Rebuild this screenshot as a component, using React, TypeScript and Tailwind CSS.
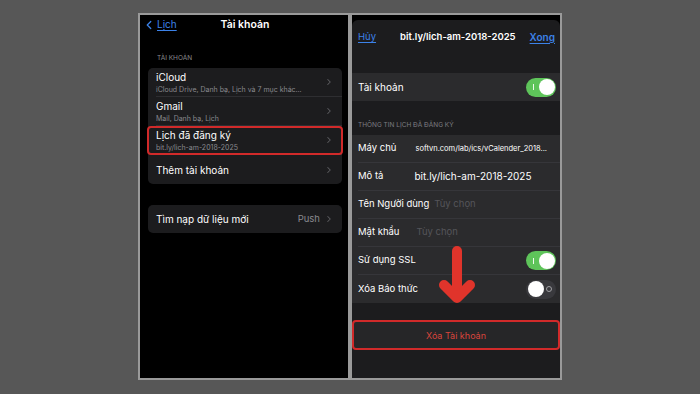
import { ChevronRight, ChevronLeft } from "lucide-react"

const font = { fontFamily: "Inter, 'Noto Sans', sans-serif" }

function Toggle({ on }: { on: boolean }) {
    if (on) {
        return (
            <div className="w-[30px] h-[19px] rounded-full bg-[#5ec45a] flex items-center justify-between pl-[7px] pr-[1.5px]">
                <div className="w-[1px] h-[6px] bg-white/90" />
                <div className="w-[16px] h-[16px] rounded-full bg-white" />
            </div>
        )
    }
    return (
        <div className="w-[30px] h-[19px] rounded-full bg-[#39393d] flex items-center justify-between pl-[1.5px] pr-[4px]">
            <div className="w-[16px] h-[16px] rounded-full bg-white" />
            <div className="w-[6px] h-[6px] rounded-full border border-[#a0a0a4]" />
        </div>
    )
}

function AccountRow({ title, sub, last, highlight }: { title: string; sub?: string; last?: boolean; highlight?: boolean }) {
    return (
        <div className="relative h-[29px] pl-[8px]">
            <div className={`h-full flex items-center pr-[8px] ${last ? "" : "border-b border-[#2e2e31]"}`}>
                <div className="flex-1 flex flex-col justify-center gap-[2px]">
                    <div className="text-[10px] leading-[12px] text-white">{title}</div>
                    {sub && <div className="text-[7px] leading-[9px] text-[#8a8a8e]">{sub}</div>}
                </div>
                <ChevronRight size={10} strokeWidth={2.5} className="text-[#5c5c60]" />
            </div>
            {highlight && (
                <div className="absolute -left-[1px] -right-[1px] top-0 bottom-0 border-2 border-[#d12a2a] rounded-[4px]" />
            )}
        </div>
    )
}

function FormRow({ label, children, last }: { label: string; children?: React.ReactNode; last?: boolean }) {
    return (
        <div className="h-[28px] bg-[#2b2b2d] pl-[6px]">
            <div className={`h-full flex items-center pr-[4px] ${last ? "" : "border-b border-[#36363a]"}`}>
                <span className="text-[9.5px] text-white">{label}</span>
                {children}
            </div>
        </div>
    )
}

function LeftScreen() {
    return (
        <div className="w-[208px] h-[363px] bg-black flex flex-col">
            <div className="h-[19px] grid grid-cols-[1fr_auto_1fr] items-center pl-[2px]">
                <div className="flex items-center text-[#3c82e8]">
                    <ChevronLeft size={14} strokeWidth={2.2} />
                    <span className="text-[10px] underline underline-offset-2 ml-[1px]">Lịch</span>
                </div>
                <div className="text-[10.5px] font-semibold text-white">Tài khoản</div>
                <div />
            </div>
            <div className="mt-[20px] h-[9px] pl-[17px] text-[6.5px] leading-[9px] text-[#8a8a8e]">TÀI KHOẢN</div>
            <div className="mt-[5px] ml-[8px] mr-[6px] bg-[#1c1c1e] rounded-[5px]">
                <AccountRow title="iCloud" sub="iCloud Drive, Danh bạ, Lịch và 7 mục khác..." />
                <AccountRow title="Gmail" sub="Mail, Danh bạ, Lịch" />
                <AccountRow title="Lịch đã đăng ký" sub="bit.ly/lich-am-2018-2025" highlight />
                <AccountRow title="Thêm tài khoản" last />
            </div>
            <div className="mt-[21px] ml-[8px] mr-[6px] h-[28px] bg-[#1c1c1e] rounded-[5px] flex items-center pl-[8px] pr-[8px]">
                <span className="flex-1 text-[10px] text-white">Tìm nạp dữ liệu mới</span>
                <span className="text-[9.5px] text-[#8a8a8e] mr-[4px]">Push</span>
                <ChevronRight size={10} strokeWidth={2.5} className="text-[#5c5c60]" />
            </div>
        </div>
    )
}

function RightScreen() {
    return (
        <div className="w-[208px] h-[363px] bg-black flex flex-col">
            <div className="h-[5px]" />
            <div className="relative flex-1 bg-[#1c1c1e] rounded-t-[6px] flex flex-col">
                <div className="h-[34px] flex items-center justify-between pl-[6px] pr-[5px]">
                    <span className="text-[9.5px] text-[#3c82e8] underline underline-offset-2">Hủy</span>
                    <span className="ml-[10px] text-[9.5px] font-semibold text-white">bit.ly/lich-am-2018-2025</span>
                    <span className="text-[10px] font-semibold text-[#3c82e8] underline underline-offset-2">Xong</span>
                </div>
                <div className="mt-[19px] h-[28px] bg-[#2b2b2d] flex items-center justify-between pl-[6px] pr-[4px]">
                    <span className="text-[10px] text-white">Tài khoản</span>
                    <Toggle on />
                </div>
                <div className="h-[34px] pt-[20px] pl-[6px] text-[6.5px] leading-[9px] text-[#7d7d82]">THÔNG TIN LỊCH ĐÃ ĐĂNG KÝ</div>
                <FormRow label="Máy chủ">
                    <span className="ml-[19px] text-[7.5px] text-white truncate">softvn.com/lab/ics/vCalender_2018...</span>
                </FormRow>
                <FormRow label="Mô tả">
                    <span className="ml-[31px] text-[10px] text-white">bit.ly/lich-am-2018-2025</span>
                </FormRow>
                <FormRow label="Tên Người dùng">
                    <span className="ml-[5px] text-[9.5px] text-[#55555a]">Tùy chọn</span>
                </FormRow>
                <FormRow label="Mật khẩu">
                    <span className="ml-[17px] text-[9.5px] text-[#55555a]">Tùy chọn</span>
                </FormRow>
                <FormRow label="Sử dụng SSL">
                    <span className="flex-1" />
                    <Toggle on />
                </FormRow>
                <FormRow label="Xóa Báo thức" last>
                    <span className="flex-1" />
                    <Toggle on={false} />
                </FormRow>
                <div className="mt-[17px] h-[30px] bg-[#262628] border-2 border-[#d12a2a] rounded-[4px] flex items-center justify-center">
                    <span className="mt-[2px] text-[9px] text-[#d9453c]">Xóa Tài khoản</span>
                </div>
                <svg className="absolute left-[84px] top-[224px]" width="42" height="64" viewBox="0 0 42 64" fill="none">
                    <path d="M21 7 V52" stroke="#e0342b" strokeWidth="10" strokeLinecap="round" />
                    <path d="M8 41 L21 54 L34 41" stroke="#e0342b" strokeWidth="10" strokeLinecap="round" strokeLinejoin="round" />
                </svg>
            </div>
        </div>
    )
}

export default function App() {
    return (
        <div className="w-[700px] h-[394px] bg-[#575757] pl-[138px] pt-[13px]" style={font}>
            <div className="w-[424px] h-[367px] bg-[#9a9a9a] p-[2px] flex gap-[4px]">
                <LeftScreen />
                <RightScreen />
            </div>
        </div>
    )
}
